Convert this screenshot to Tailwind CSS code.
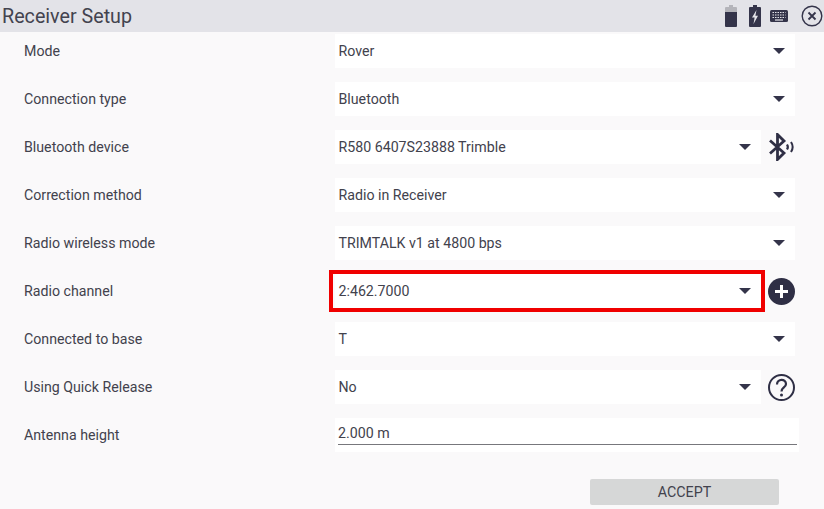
<!DOCTYPE html>
<html lang="en">
<head>
<meta charset="UTF-8">
<title>Receiver Setup</title>
<script src="https://cdn.jsdelivr.net/npm/@tailwindcss/browser@4"></script>
</head>
<body class="w-[824px] h-[509px] overflow-hidden bg-[#faf9fa] text-[#42424d] font-['Roboto',sans-serif] text-[14.2px]">
    <header class="h-8 bg-[#e3e3e8] flex items-center pl-[2px] pr-[1px]">
        <h1 class="text-[19.7px] text-[#43434f] flex-1 pt-[1px]">Receiver Setup</h1>
        <svg class="w-3 h-[22px]" viewBox="0 0 12 22"><path d="M4 0h4v2h3a1 1 0 0 1 1 1v4H0V3a1 1 0 0 1 1-1h3z" fill="#b4b4ba"/><path d="M0 7h12v14a1 1 0 0 1-1 1H1a1 1 0 0 1-1-1z" fill="#34344a"/></svg>
        <svg class="w-3 h-[22px] ml-3" viewBox="0 0 12 22"><path d="M4 0h4v2h3a1 1 0 0 1 1 1v18a1 1 0 0 1-1 1H1a1 1 0 0 1-1-1V3a1 1 0 0 1 1-1h3z" fill="#34344a"/><path d="M7.500 5 3 12.500h2.600L4.500 19 9 10.800H6.400z" fill="#e3e3e8"/></svg>
        <svg class="w-[18px] h-3 ml-[9px]" viewBox="0 0 18 12"><rect width="18" height="12" rx="1.500" fill="#34344a"/><path d="M2.500 2.500h13M2.500 5h13M2.500 7.500h13" stroke="#e3e3e8" stroke-width="1.200" stroke-dasharray="1.500 1"/><path d="M5 10h8" stroke="#e3e3e8" stroke-width="1.200"/></svg>
        <svg class="w-[22px] h-[22px] ml-[13px]" viewBox="0 0 22 22" fill="none" stroke="#34344a"><circle cx="11" cy="11" r="9.800" stroke-width="1.400"/><path d="M7.500 7.500l7 7M14.500 7.500l-7 7" stroke-width="1.800"/></svg>
    </header>

    <main class="pt-[2px] flex flex-col gap-[14px]">
        <div class="flex items-center h-[34px]">
            <label class="w-[335px] pl-6 pt-[2px]">Mode</label>
            <div class="w-[460px] h-full bg-white flex items-center justify-between pl-[3.5px] pr-[10px]"><span class="pt-[2px]">Rover</span><span class="w-0 h-0 border-x-[6px] border-x-transparent border-t-[6px] border-t-[#34344a]"></span></div>
        </div>
        <div class="flex items-center h-[34px]">
            <label class="w-[335px] pl-6 pt-[2px]">Connection type</label>
            <div class="w-[460px] h-full bg-white flex items-center justify-between pl-[3.5px] pr-[10px]"><span class="pt-[2px]">Bluetooth</span><span class="w-0 h-0 border-x-[6px] border-x-transparent border-t-[6px] border-t-[#34344a]"></span></div>
        </div>
        <div class="flex items-center h-[34px]">
            <label class="w-[335px] pl-6 pt-[2px]">Bluetooth device</label>
            <div class="w-[426px] h-full bg-white flex items-center justify-between pl-[3.5px] pr-[10px]"><span class="pt-[2px]">R580 6407S23888 Trimble</span><span class="w-0 h-0 border-x-[6px] border-x-transparent border-t-[6px] border-t-[#34344a]"></span></div>
            <svg class="w-[27px] h-[28px] ml-[7px]" viewBox="0 0 27 28" fill="none" stroke="#2f2f45"><path d="M2 7.500 16 20l-6.500 6.500V1.500L16 8 2 20.500" stroke-width="2.800"/><path d="M19 11.500c1 1.500 1 3.500 0 5" stroke-width="2.200"/><path d="M23 9c2 3 2 7 0 10" stroke-width="2"/></svg>
        </div>
        <div class="flex items-center h-[34px]">
            <label class="w-[335px] pl-6 pt-[2px]">Correction method</label>
            <div class="w-[460px] h-full bg-white flex items-center justify-between pl-[3.5px] pr-[10px]"><span class="pt-[2px]">Radio in Receiver</span><span class="w-0 h-0 border-x-[6px] border-x-transparent border-t-[6px] border-t-[#34344a]"></span></div>
        </div>
        <div class="flex items-center h-[34px]">
            <label class="w-[335px] pl-6 pt-[2px]">Radio wireless mode</label>
            <div class="w-[460px] h-full bg-white flex items-center justify-between pl-[3.5px] pr-[10px]"><span class="pt-[2px]">TRIMTALK v1 at 4800 bps</span><span class="w-0 h-0 border-x-[6px] border-x-transparent border-t-[6px] border-t-[#34344a]"></span></div>
        </div>
        <div class="flex items-center h-[34px]">
            <label class="w-[335px] pl-6 pt-[2px]">Radio channel</label>
            <div class="relative w-[426px] h-full bg-white flex items-center justify-between pl-[3.5px] pr-[10px]"><span class="pt-[2px]">2:462.7000</span><span class="w-0 h-0 border-x-[6px] border-x-transparent border-t-[6px] border-t-[#34344a]"></span>
                <div class="absolute -left-[6px] -right-[4px] -top-1 -bottom-1 border-4 border-[#f00000]"></div>
            </div>
            <svg class="w-[27px] h-[27px] ml-[7px]" viewBox="0 0 27 27"><circle cx="13.500" cy="13.500" r="13.500" fill="#2f2f45"/><path d="M13.500 7v13M7 13.500h13" stroke="#fff" stroke-width="3"/></svg>
        </div>
        <div class="flex items-center h-[34px]">
            <label class="w-[335px] pl-6 pt-[2px]">Connected to base</label>
            <div class="w-[460px] h-full bg-white flex items-center justify-between pl-[3.5px] pr-[10px]"><span class="pt-[2px]">T</span><span class="w-0 h-0 border-x-[6px] border-x-transparent border-t-[6px] border-t-[#34344a]"></span></div>
        </div>
        <div class="flex items-center h-[34px]">
            <label class="w-[335px] pl-6 pt-[2px]">Using Quick Release</label>
            <div class="w-[426px] h-full bg-white flex items-center justify-between pl-[3.5px] pr-[10px]"><span class="pt-[2px]">No</span><span class="w-0 h-0 border-x-[6px] border-x-transparent border-t-[6px] border-t-[#34344a]"></span></div>
            <svg class="w-[27px] h-[27px] ml-[7px]" viewBox="0 0 27 27" fill="none" stroke="#2f2f45"><circle cx="13.500" cy="13.500" r="12.500" stroke-width="2"/><path d="M9 10.500c0-6 9-6 9-.5 0 3.500-4.500 3.500-4.500 7.500" stroke-width="2.200"/><circle cx="13.500" cy="21" r="1.500" fill="#2f2f45" stroke="none"/></svg>
        </div>
        <div class="flex items-center h-[34px]">
            <label class="w-[335px] pl-6 pt-[2px]">Antenna height</label>
            <div class="w-[464px] h-full bg-white pl-[3px] pr-[2px] pt-[3px]">
                <div class="h-[24px] pt-[3px] flex items-center border-b border-[#77777c]">2.000 m</div>
            </div>
        </div>
    </main>

    <div class="flex justify-end pr-[45px] mt-[27px]">
        <button class="w-[189px] h-[26px] bg-[#d6d7d7] rounded-[2px] text-[14.3px] pt-[2px]">ACCEPT</button>
    </div>
</body>
</html>
